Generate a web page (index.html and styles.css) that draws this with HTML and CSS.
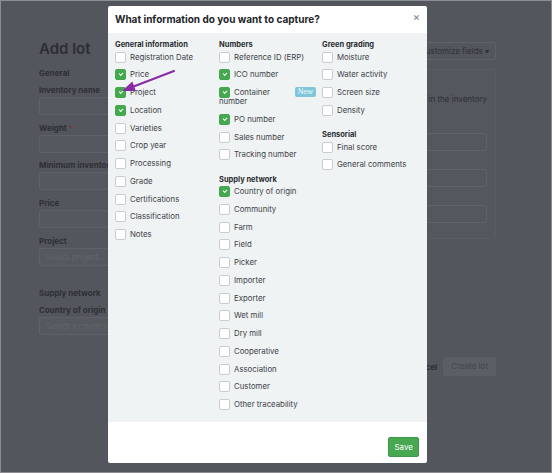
FILE: index.html
```html
<!DOCTYPE html>
<html>
<head>
<meta charset="utf-8">
<link rel="stylesheet" href="styles.css">
</head>
<body>
<div class="frame">
  <div class="page">
    <div class="form">
      <h1 class="page-title">Add lot</h1>
      <div class="group-title">General</div>
      <label class="f-label">Inventory name</label>
      <div class="f-input"></div>
      <label class="f-label">Weight <span class="req">*</span></label>
      <div class="f-input"></div>
      <label class="f-label">Minimum inventory</label>
      <div class="f-input"></div>
      <label class="f-label">Price</label>
      <div class="f-input"></div>
      <label class="f-label">Project</label>
      <div class="f-input ph">Select project...</div>
      <div class="group-title second">Supply network</div>
      <label class="f-label">Country of origin</label>
      <div class="f-input ph">Select a country...</div>
    </div>
    <div class="side">
      <div class="side-top"><span class="cust-btn">Customize fields ▾</span></div>
      <div class="panel">
        <p class="panel-text">These fields will be shown in the inventory</p>
        <div class="p-input first"></div>
        <div class="p-input"></div>
        <div class="p-input"></div>
      </div>
      <div class="actions"><span class="cancel">Cancel</span><span class="create">Create lot</span></div>
    </div>
  </div>

  <div class="modal">
    <div class="m-head">
      <h2 class="m-title">What information do you want to capture?</h2>
      <span class="m-close">×</span>
    </div>
    <div class="m-body">
      <div class="col c1">
        <div class="sec">General information</div>
        <div class="row"><span class="cb"></span>Registration Date</div>
        <div class="row"><span class="cb on"></span>Price</div>
        <div class="row"><span class="cb on"></span>Project</div>
        <div class="row"><span class="cb on"></span>Location</div>
        <div class="row"><span class="cb"></span>Varieties</div>
        <div class="row"><span class="cb"></span>Crop year</div>
        <div class="row"><span class="cb"></span>Processing</div>
        <div class="row"><span class="cb"></span>Grade</div>
        <div class="row"><span class="cb"></span>Certifications</div>
        <div class="row"><span class="cb"></span>Classification</div>
        <div class="row"><span class="cb"></span>Notes</div>
      </div>
      <div class="col c2">
        <div class="sec">Numbers</div>
        <div class="row"><span class="cb"></span>Reference ID (ERP)</div>
        <div class="row"><span class="cb on"></span>ICO number</div>
        <div class="row"><span class="badge">New</span><span class="cb on"></span>Container number</div>
        <div class="row"><span class="cb on"></span>PO number</div>
        <div class="row"><span class="cb"></span>Sales number</div>
        <div class="row"><span class="cb"></span>Tracking number</div>
        <div class="sec gap">Supply network</div>
        <div class="row"><span class="cb on"></span>Country of origin</div>
        <div class="row"><span class="cb"></span>Community</div>
        <div class="row"><span class="cb"></span>Farm</div>
        <div class="row"><span class="cb"></span>Field</div>
        <div class="row"><span class="cb"></span>Picker</div>
        <div class="row"><span class="cb"></span>Importer</div>
        <div class="row"><span class="cb"></span>Exporter</div>
        <div class="row"><span class="cb"></span>Wet mill</div>
        <div class="row"><span class="cb"></span>Dry mill</div>
        <div class="row"><span class="cb"></span>Cooperative</div>
        <div class="row"><span class="cb"></span>Association</div>
        <div class="row"><span class="cb"></span>Customer</div>
        <div class="row"><span class="cb"></span>Other traceability</div>
      </div>
      <div class="col c3">
        <div class="sec">Green grading</div>
        <div class="row"><span class="cb"></span>Moisture</div>
        <div class="row"><span class="cb"></span>Water activity</div>
        <div class="row"><span class="cb"></span>Screen size</div>
        <div class="row"><span class="cb"></span>Density</div>
        <div class="sec gap">Sensorial</div>
        <div class="row"><span class="cb"></span>Final score</div>
        <div class="row"><span class="cb"></span>General comments</div>
      </div>
      <svg class="arrow" width="70" height="40" viewBox="0 0 70 40">
        <line x1="59" y1="4" x2="16" y2="20.5" stroke="#8a2aa6" stroke-width="2" stroke-linecap="round"/>
        <polygon points="7,24 17.3,14.6 20.9,24" fill="#8a2aa6"/>
      </svg>
    </div>
    <div class="m-foot"><button class="save">Save</button></div>
  </div>
</div>
</body>
</html>
```

FILE: styles.css
```css
* { box-sizing: border-box; }
html, body { margin: 0; padding: 0; }
body {
  width: 552px;
  height: 473px;
  overflow: hidden;
  background: #3f4247;
  font-family: Inter, "Noto Sans", sans-serif;
}
.frame {
  position: relative;
  width: 552px;
  height: 473px;
  border: 1px solid #8b8e93;
  background: #53565c;
  overflow: hidden;
}
.page {
  display: flex;
  padding: 39px 0 0 38px;
  color: #2b2d31;
}
.form { width: 262px; }
.page-title {
  margin: 0;
  font-size: 15px;
  font-weight: 600;
  line-height: 18px;
  color: #2c2e32;
}
.group-title {
  margin-top: 10px;
  font-size: 8px;
  font-weight: 700;
  line-height: 10px;
  color: #2e3034;
}
.group-title.second { margin-top: 22px; }
.f-label {
  display: block;
  margin-top: 7px;
  font-size: 8px;
  font-weight: 700;
  line-height: 10px;
  color: #2e3034;
}
.req { color: #7a3a3d; }
.f-input {
  height: 18px;
  margin-top: 2px;
  border: 1px solid #5e6167;
  border-radius: 2px;
  background: #55585e;
  font-size: 8px;
  line-height: 16px;
  padding-left: 6px;
  color: #62656b;
}
.f-input + .f-label { margin-top: 7.7px; }
.side {
  width: 195px;
  display: flex;
  flex-direction: column;
}
.side-top {
  display: flex;
  justify-content: flex-end;
  padding-top: 2px;
}
.cust-btn {
  height: 18px;
  padding: 0 6px 0 8px;
  border: 1px solid #5f6268;
  border-radius: 2px;
  font-size: 8px;
  line-height: 16px;
  color: #2e3034;
}
.panel {
  margin-top: 9px;
  height: 170px;
  background: #54575d;
  border: 1px solid #595c62;
  border-radius: 2px;
  padding: 24px 8px 0 10px;
}
.panel-text {
  margin: 0;
  font-size: 8px;
  line-height: 10px;
  color: #2e3034;
  text-align: right;
}
.p-input {
  height: 18px;
  margin-top: 18px;
  border: 1px solid #5f6268;
  border-radius: 2px;
}
.p-input.first { margin-top: 29px; }
.actions {
  display: flex;
  justify-content: flex-end;
  align-items: center;
  margin-top: 118px;
  gap: 6px;
}
.cancel { font-size: 8px; font-weight: 700; color: #2b2d31; }
.create {
  height: 19px;
  padding: 0 8px;
  background: #5b5e64;
  border-radius: 2px;
  font-size: 8px;
  line-height: 19px;
  color: #44474c;
}

/* modal */
.modal {
  position: absolute;
  left: 107px;
  top: 5px;
  width: 319px;
  height: 457px;
  background: #fff;
  border-radius: 2px;
  display: flex;
  flex-direction: column;
}
.m-head {
  height: 27px;
  position: relative;
  padding: 7px 0 0 7px;
}
.m-title {
  margin: 0;
  font-size: 10px;
  font-weight: 700;
  line-height: 13px;
  color: #232529;
}
.m-close {
  position: absolute;
  right: 7px;
  top: 5px;
  font-size: 11px;
  line-height: 12px;
  color: #777a80;
}
.m-body {
  position: relative;
  height: 389px;
  background: #eff3f4;
  display: flex;
  padding: 8px 0 0 7px;
}
.col { flex: none; }
.c1 { width: 104px; }
.c2 { width: 97px; margin-right: 6px; }
.c3 { width: 100px; }
.sec {
  font-size: 7.5px;
  font-weight: 700;
  line-height: 8px;
  color: #2a2c30;
}
.sec.gap { margin-top: 11px; }
.row {
  padding: 3.5px 0 5.25px;
  font-size: 7.8px;
  line-height: 9px;
  color: #3e4248;
}
.cb {
  display: inline-block;
  vertical-align: top;
  width: 11px;
  height: 11px;
  margin: -1px 4px -1px 0;
  background: #fff;
  border: 1px solid #c9cdd1;
  border-radius: 2px;
  position: relative;
}
.cb.on {
  background: #45a84f;
  border-color: #45a84f;
}
.cb.on::after {
  content: "";
  position: absolute;
  left: 3px;
  top: 2px;
  width: 3px;
  height: 2px;
  border-left: 1px solid #fff;
  border-bottom: 1px solid #fff;
  transform: rotate(-45deg);
}
.badge {
  float: right;
  margin-top: -1px;
  height: 10px;
  padding: 0 3px;
  background: #7fc6da;
  border-radius: 2px;
  color: #eaf6fa;
  font-size: 7px;
  line-height: 10px;
}
.arrow {
  position: absolute;
  left: 7px;
  top: 34px;
}
.m-foot {
  flex: 1;
  display: flex;
  justify-content: flex-end;
  align-items: flex-start;
  padding: 15px 8px 0 0;
}
.save {
  height: 20px;
  padding: 0 5px;
  border: 1px solid #3f9a48;
  border-radius: 2px;
  background: #47a851;
  color: #fff;
  font-family: Inter, "Noto Sans", sans-serif;
  font-size: 8px;
  line-height: 18px;
}
```
